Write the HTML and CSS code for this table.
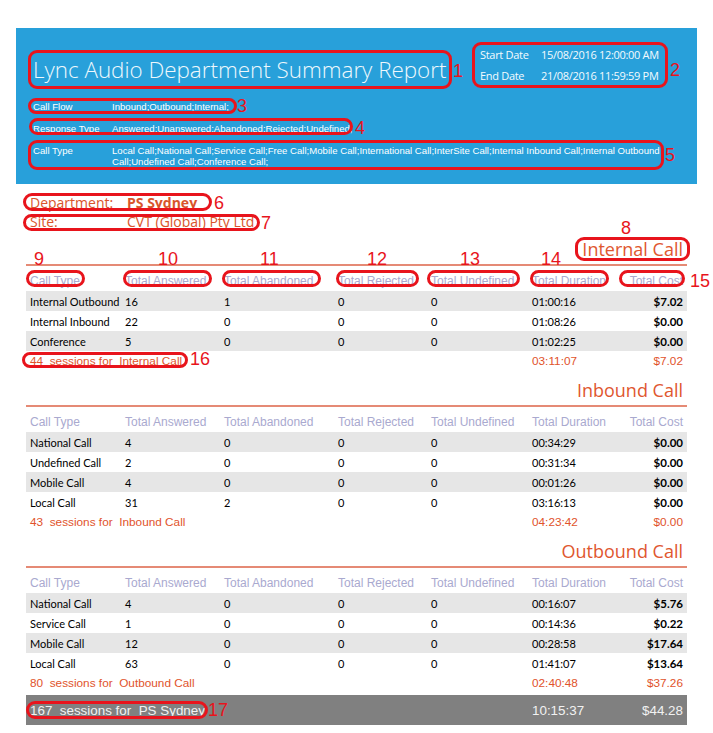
FILE: index.html
```html
<!DOCTYPE html>
<html lang="en">
<head>
<meta charset="utf-8">
<title>Lync Audio Department Summary Report</title>
<link rel="stylesheet" href="styles.css">
</head>
<body>
<div class="page">
  <header class="banner">
    <div class="banner-top">
      <h1 class="report-title">Lync Audio Department Summary Report</h1>
      <dl class="dates">
        <dt>Start Date</dt><dd>15/08/2016 12:00:00 AM</dd>
        <dt>End Date</dt><dd>21/08/2016 11:59:59 PM</dd>
      </dl>
    </div>
    <dl class="filters">
      <dt>Call Flow</dt><dd>Inbound;Outbound;Internal;</dd>
      <dt>Response Type</dt><dd>Answered;Unanswered;Abandoned;Rejected;Undefined;</dd>
      <dt>Call Type</dt><dd class="wrap">Local Call;National Call;Service Call;Free Call;Mobile Call;International Call;InterSite Call;Internal Inbound Call;Internal Outbound Call;Undefined Call;Conference Call;</dd>
    </dl>
  </header>

  <div class="dept">
    <div class="dept-row"><span class="dept-label">Department:</span><strong class="dept-value">PS Sydney</strong></div>
    <div class="dept-row"><span class="dept-label">Site:</span><span class="dept-value">CVT (Global) Pty Ltd</span></div>
  </div>

  <section class="group">
    <h2 class="group-title">Internal Call</h2>
    <div class="row head"><span>Call Type</span><span>Total Answered</span><span>Total Abandoned</span><span>Total Rejected</span><span>Total Undefined</span><span>Total Duration</span><span class="cost">Total Cost</span></div>
    <div class="row data alt"><span>Internal Outbound</span><span>16</span><span>1</span><span>0</span><span>0</span><span>01:00:16</span><b class="cost">$7.02</b></div>
    <div class="row data"><span>Internal Inbound</span><span>22</span><span>0</span><span>0</span><span>0</span><span>01:08:26</span><b class="cost">$0.00</b></div>
    <div class="row data alt"><span>Conference</span><span>5</span><span>0</span><span>0</span><span>0</span><span>01:02:25</span><b class="cost">$0.00</b></div>
    <div class="row sum"><span class="sum-label">44  sessions for  Internal Call</span><span class="sum-dur">03:11:07</span><span class="cost">$7.02</span></div>
  </section>

  <section class="group">
    <h2 class="group-title">Inbound Call</h2>
    <div class="row head"><span>Call Type</span><span>Total Answered</span><span>Total Abandoned</span><span>Total Rejected</span><span>Total Undefined</span><span>Total Duration</span><span class="cost">Total Cost</span></div>
    <div class="row data alt"><span>National Call</span><span>4</span><span>0</span><span>0</span><span>0</span><span>00:34:29</span><b class="cost">$0.00</b></div>
    <div class="row data"><span>Undefined Call</span><span>2</span><span>0</span><span>0</span><span>0</span><span>00:31:34</span><b class="cost">$0.00</b></div>
    <div class="row data alt"><span>Mobile Call</span><span>4</span><span>0</span><span>0</span><span>0</span><span>00:01:26</span><b class="cost">$0.00</b></div>
    <div class="row data"><span>Local Call</span><span>31</span><span>2</span><span>0</span><span>0</span><span>03:16:13</span><b class="cost">$0.00</b></div>
    <div class="row sum"><span class="sum-label">43  sessions for  Inbound Call</span><span class="sum-dur">04:23:42</span><span class="cost">$0.00</span></div>
  </section>

  <section class="group">
    <h2 class="group-title">Outbound Call</h2>
    <div class="row head"><span>Call Type</span><span>Total Answered</span><span>Total Abandoned</span><span>Total Rejected</span><span>Total Undefined</span><span>Total Duration</span><span class="cost">Total Cost</span></div>
    <div class="row data alt"><span>National Call</span><span>4</span><span>0</span><span>0</span><span>0</span><span>00:16:07</span><b class="cost">$5.76</b></div>
    <div class="row data"><span>Service Call</span><span>1</span><span>0</span><span>0</span><span>0</span><span>00:14:36</span><b class="cost">$0.22</b></div>
    <div class="row data alt"><span>Mobile Call</span><span>12</span><span>0</span><span>0</span><span>0</span><span>00:28:58</span><b class="cost">$17.64</b></div>
    <div class="row data"><span>Local Call</span><span>63</span><span>0</span><span>0</span><span>0</span><span>01:41:07</span><b class="cost">$13.64</b></div>
    <div class="row sum"><span class="sum-label">80  sessions for  Outbound Call</span><span class="sum-dur">02:40:48</span><span class="cost">$37.26</span></div>
  </section>

  <div class="row total"><span class="sum-label">167  sessions for  PS Sydney</span><span class="sum-dur">10:15:37</span><span class="cost">$44.28</span></div>

  <div class="marks" aria-hidden="true">
    <div class="mark m1"></div><span class="num n1">1</span>
    <div class="mark m2"></div><span class="num n2">2</span>
    <div class="mark m3"></div><span class="num n3">3</span>
    <div class="mark m4"></div><span class="num n4">4</span>
    <div class="mark m5"></div><span class="num n5">5</span>
    <div class="mark m6"></div><span class="num n6">6</span>
    <div class="mark m7"></div><span class="num n7">7</span>
    <div class="mark m8"></div><span class="num n8">8</span>
    <div class="mark m9"></div><span class="num n9">9</span>
    <div class="mark m10"></div><span class="num n10">10</span>
    <div class="mark m11"></div><span class="num n11">11</span>
    <div class="mark m12"></div><span class="num n12">12</span>
    <div class="mark m13"></div><span class="num n13">13</span>
    <div class="mark m14"></div><span class="num n14">14</span>
    <div class="mark m15"></div><span class="num n15">15</span>
    <div class="mark m16"></div><span class="num n16">16</span>
    <div class="mark m17"></div><span class="num n17">17</span>
  </div>
</div>
</body>
</html>
```

FILE: styles.css
```css
* { box-sizing: border-box; }
html, body { margin: 0; padding: 0; background: #fff; }
body { font-family: "Open Sans", "Liberation Sans", sans-serif; color: #000; }

.page {
  position: relative;
  width: 713px;
  min-height: 733px;
  padding: 28px 16px 0 16px;
}

/* ---------- blue banner ---------- */
.banner {
  background: #28a0da;
  color: #fff;
  height: 156px;
  padding: 0 0 0 17px;
}
.banner-top {
  display: flex;
  align-items: flex-start;
  height: 73px;
}
.report-title {
  margin: 27px 0 0 0;
  font-weight: 300;
  font-size: 22.4px;
  line-height: 30px;
  color: #eef8fd;
  width: 447px;
  white-space: nowrap;
}
.dates {
  margin: 19px 0 0 0;
  display: grid;
  grid-template-columns: 61px auto;
  row-gap: 5px;
  font-size: 11px;
  letter-spacing: -0.3px;
  line-height: 16px;
  color: #f4fbfe;
}
.dates dt, .dates dd { margin: 0; }

.filters {
  margin: 0;
  display: grid;
  grid-template-columns: 79px 552px;
  row-gap: 11px;
  font-family: "Liberation Sans", Arial, sans-serif;
  font-size: 9.6px;
  line-height: 11px;
  color: #fff;
}
.filters dt, .filters dd { margin: 0; }

/* ---------- department ---------- */
.dept {
  margin: 9px 0 0 0;
  padding-left: 14px;
  font-size: 14px;
  line-height: 19px;
  color: #d9542b;
}
.dept-row { display: flex; }
.dept-label { width: 97px; }
.dept-value { font-weight: 400; }
strong.dept-value { font-weight: 700; }

/* ---------- groups ---------- */
.group { margin: 0 10px; }
.group-title {
  margin: 0;
  padding: 8px 4px 4px 0;
  font-size: 18px;
  line-height: 22px;
  font-weight: 400;
  text-align: right;
  color: #e0572f;
  border-bottom: 2px solid #e58a75;
}
.dept + .group .group-title { padding-top: 7px; }

.row {
  display: grid;
  grid-template-columns: 99px 99px 114px 93px 101px 1fr 80px;
  align-items: center;
  height: 20px;
  font-family: Lato, "Open Sans", sans-serif;
  font-size: 11px;
  white-space: nowrap;
}
.row > :first-child { padding-left: 4px; }
.row .cost { text-align: right; padding-right: 4px; }

.row.head {
  height: 25px;
  padding-top: 4px;
  font-family: "Liberation Sans", Arial, sans-serif;
  font-size: 12px;
  color: #a9a9cf;
}
.row.data { color: #000; }
.row.data b { font-weight: 700; font-size: 11.5px; }
.row.alt { background: #e6e6e6; }

.row.sum {
  font-family: "Liberation Sans", Arial, sans-serif;
  font-size: 11.8px;
  color: #e1532b;
}
.sum-label { grid-column: 1 / 6; white-space: pre; }
.sum-dur { grid-column: 6; }
.row .cost:last-child { grid-column: 7; }

.row.total {
  margin: 2px 10px 0 10px;
  height: 30px;
  background: #808080;
  color: #f2f2f2;
  font-family: "Liberation Sans", Arial, sans-serif;
  font-size: 13.4px;
}

/* ---------- annotation overlay ---------- */
.marks { position: absolute; inset: 0; pointer-events: none; }
.mark {
  position: absolute;
  border: 3px solid #e8141c;
  border-radius: 9px;
}
.num {
  position: absolute;
  font-family: "Liberation Sans", Arial, sans-serif;
  font-size: 18px;
  line-height: 18px;
  color: #e8141c;
}
.m1 { left: 28px; top: 50px; width: 424px; height: 39px; }
.n1 { left: 453px; top: 62px; }
.m2 { left: 472px; top: 42px; width: 196px; height: 46px; }
.n2 { left: 670px; top: 61px; }
.m3 { left: 28px; top: 98px; width: 209px; height: 16px; }
.n3 { left: 237px; top: 97px; }
.m4 { left: 29px; top: 118px; width: 324px; height: 17px; }
.n4 { left: 355px; top: 119px; }
.m5 { left: 28px; top: 140px; width: 636px; height: 30px; }
.n5 { left: 665px; top: 146px; }
.m6 { left: 23px; top: 193px; width: 189px; height: 18px; }
.n6 { left: 214px; top: 194px; }
.m7 { left: 23px; top: 214px; width: 237px; height: 17px; }
.n7 { left: 261px; top: 214px; }
.m8 { left: 575px; top: 237px; width: 115px; height: 24px; }
.n8 { left: 621px; top: 219px; }
.m9 { left: 26px; top: 270px; width: 59px; height: 17px; }
.n9 { left: 34px; top: 250px; }
.m10 { left: 123px; top: 270px; width: 89px; height: 17px; }
.n10 { left: 158px; top: 250px; }
.m11 { left: 222px; top: 270px; width: 99px; height: 17px; }
.n11 { left: 260px; top: 250px; }
.m12 { left: 336px; top: 270px; width: 83px; height: 17px; }
.n12 { left: 367px; top: 250px; }
.m13 { left: 427px; top: 270px; width: 93px; height: 17px; }
.n13 { left: 460px; top: 250px; }
.m14 { left: 530px; top: 270px; width: 79px; height: 17px; }
.n14 { left: 541px; top: 250px; }
.m15 { left: 619px; top: 270px; width: 66px; height: 17px; }
.n15 { left: 690px; top: 272px; }
.m16 { left: 22px; top: 352px; width: 166px; height: 16px; }
.n16 { left: 190px; top: 350px; }
.m17 { left: 26px; top: 701px; width: 182px; height: 18px; }
.n17 { left: 208px; top: 701px; }
```
